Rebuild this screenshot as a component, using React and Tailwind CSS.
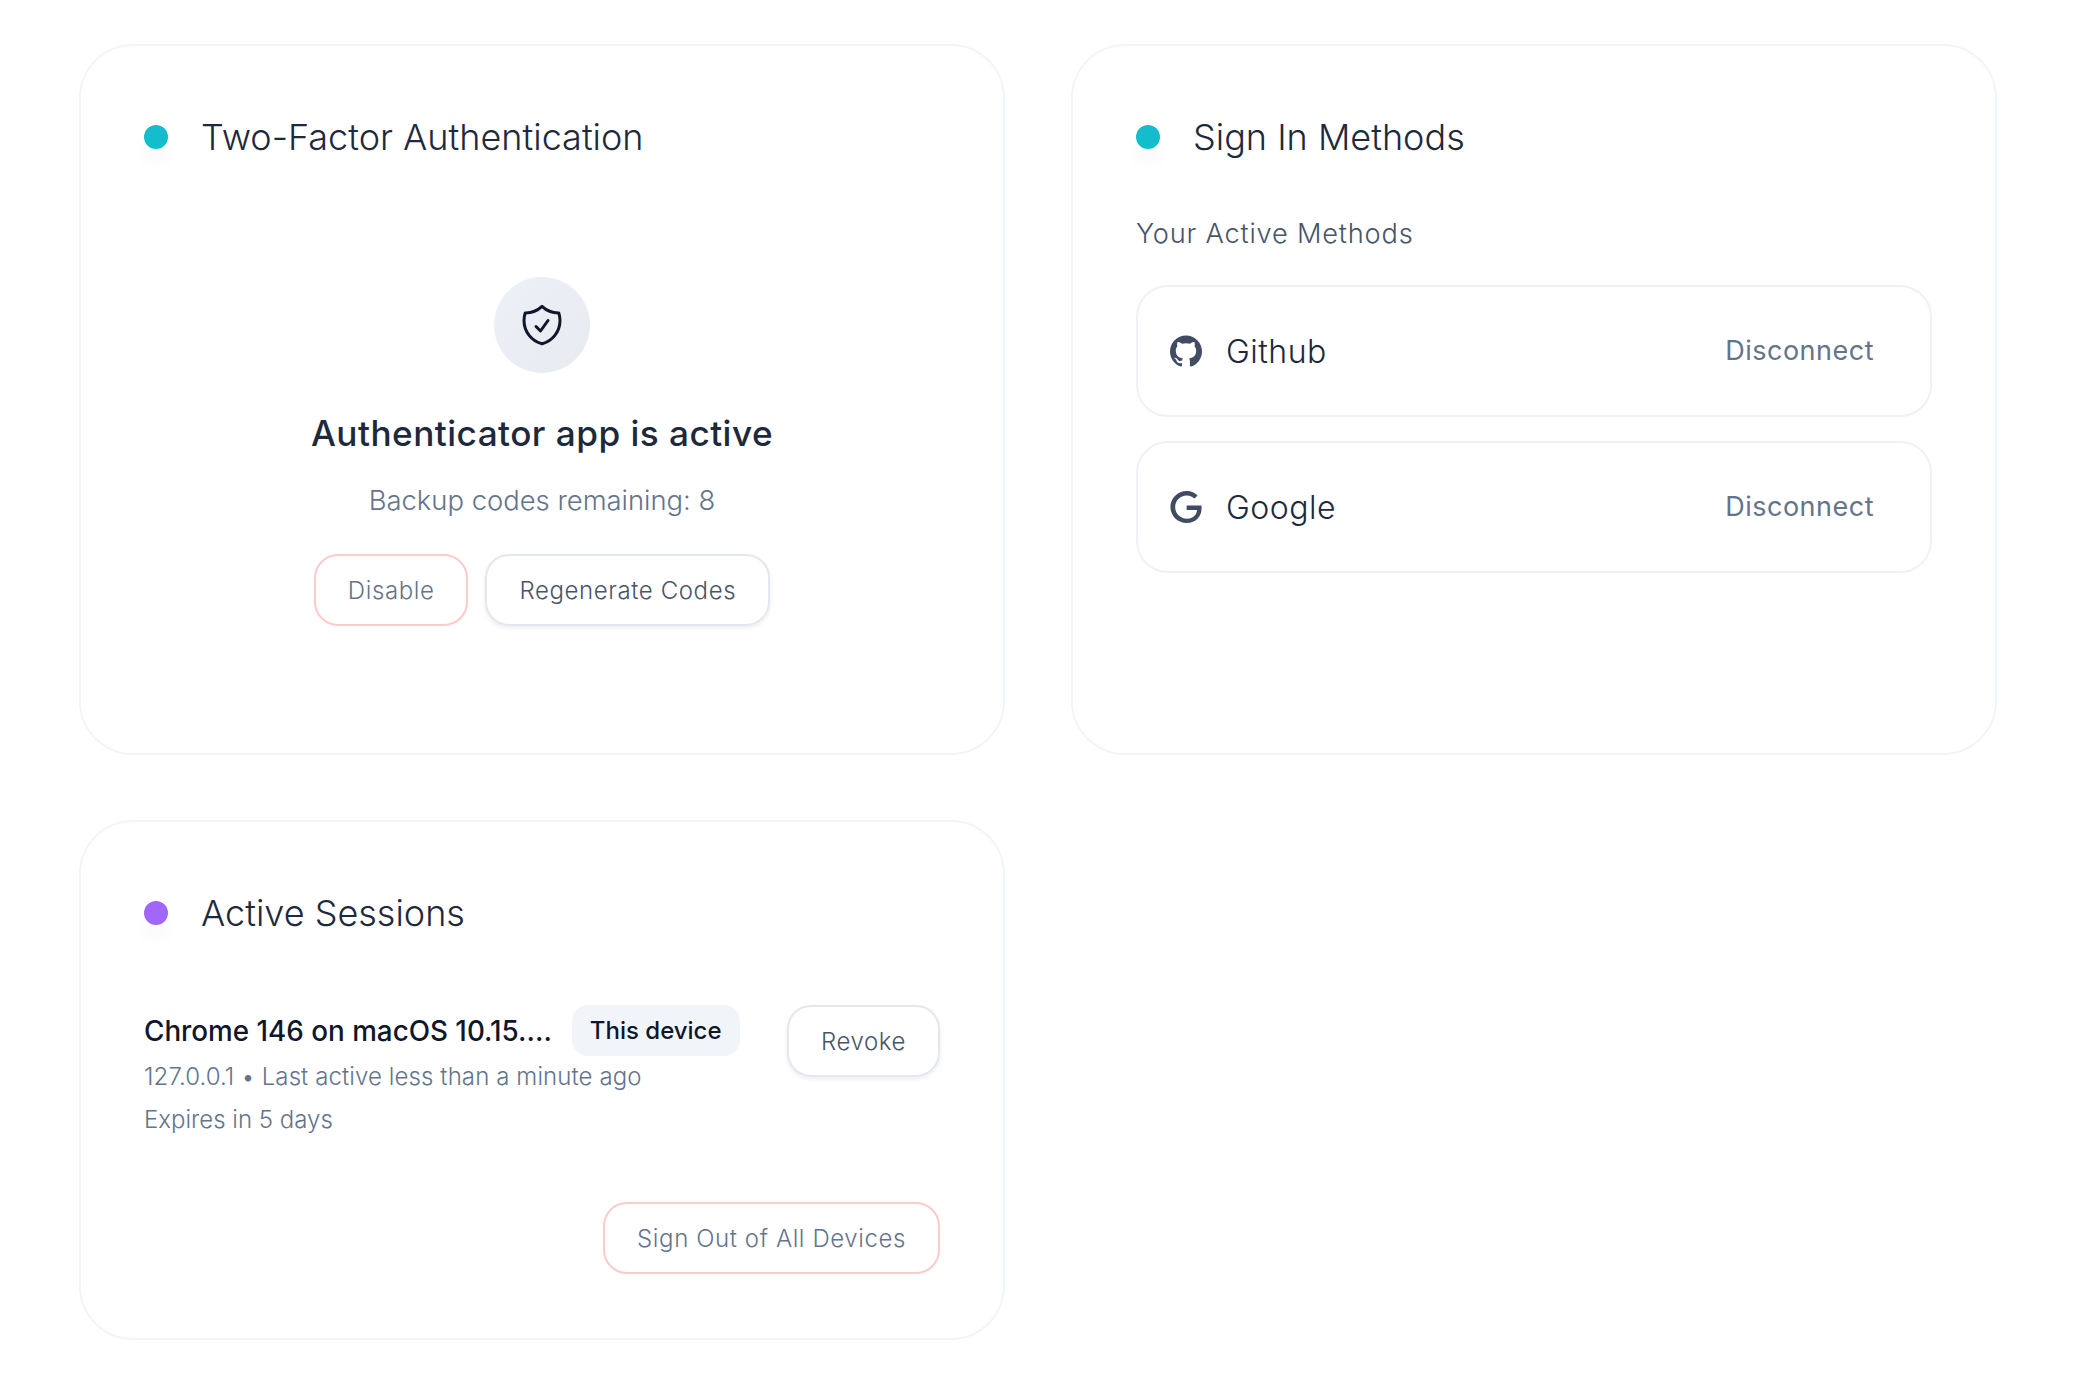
import { HiOutlineShieldCheck } from "react-icons/hi2";
import { SiGithub, SiGoogle } from "react-icons/si";

function CardTitle({ color, children }) {
  return (
    <div className="flex items-center gap-[33px]">
      <span className={`w-6 h-6 rounded-full shrink-0 shadow-[0_16px_20px_-2px_rgba(15,23,42,0.04)] ${color}`} />
      <h2 className="text-[36px] leading-[48px] font-[350] text-[#1e293b]">{children}</h2>
    </div>
  );
}

function Card({ className, children }) {
  return <div className={`rounded-[54px] border-2 border-[#f1f5f9] bg-white px-[63px] pt-[67px] ${className}`}>{children}</div>;
}

function MethodRow({ icon, name }) {
  return (
    <div className="h-[132px] rounded-[32px] border-2 border-[#eef1f7] flex items-center justify-between pl-[32px] pr-[56px]">
      <div className="flex items-center gap-[24px]">
        {icon}
        <span className="pt-[2px] text-[32px] font-[350] tracking-[0.5px] text-[#1e293b]">{name}</span>
      </div>
      <button className="pt-[1px] text-[27px] font-normal tracking-[0.5px] text-[#64748b]">Disconnect</button>
    </div>
  );
}

const dangerBtn = "h-[72px] px-[32px] pt-[1px] rounded-[24px] border-2 border-[#fecaca] text-[24px] font-[350] tracking-[0.6px] text-[#64748b]";
const plainBtn = "h-[72px] px-[32px] pt-[1px] rounded-[24px] border-2 border-[#e2e8f0] shadow-[0_2px_4px_rgba(15,23,42,0.08)] text-[24px] font-[350] tracking-[0.6px] text-[#475569]";

export default function App() {
  return (
    <div className="min-h-screen bg-white font-['Inter',sans-serif]">
      <div className="grid grid-cols-[926px_926px] gap-x-[66px] gap-y-[65px] pl-[79px] pt-[44px]">
        <Card className="h-[711px]">
          <CardTitle color="bg-[#14bdcb]">Two-Factor Authentication</CardTitle>
          <div className="flex flex-col items-center mt-[116px]">
            <div className="w-[96px] h-[96px] rounded-full bg-gradient-to-br from-[#edf1f8] to-[#e7eaef] flex items-center justify-center">
              <HiOutlineShieldCheck size={48} className="text-[#0f172a]" />
            </div>
            <div className="mt-[36px] text-[35.2px] leading-[48px] font-medium tracking-[0.45px] text-[#1e293b]">Authenticator app is active</div>
            <div className="mt-[23px] text-[27.4px] leading-[40px] font-[350] text-[#64748b]">Backup codes remaining: 8</div>
            <div className="mt-[34px] flex gap-[17px]">
              <button className={dangerBtn}>Disable</button>
              <button className={plainBtn}>Regenerate Codes</button>
            </div>
          </div>
        </Card>
        <Card className="h-[711px]">
          <CardTitle color="bg-[#14bdcb]">Sign In Methods</CardTitle>
          <div className="mt-[52px] text-[27.2px] leading-[41px] font-[350] tracking-[0.8px] text-[#475569]">Your Active Methods</div>
          <div className="mt-[31px] flex flex-col gap-[24px]">
            <MethodRow icon={<SiGithub size={32} className="text-[#414c62]" />} name="Github" />
            <MethodRow icon={<SiGoogle size={32} className="text-[#414c62]" />} name="Google" />
          </div>
        </Card>
        <Card className="h-[520px]">
          <CardTitle color="bg-[#a366fa]">Active Sessions</CardTitle>
          <div className="mt-[68px] flex items-start justify-between">
            <div>
              <div className="flex items-center gap-[20px]">
                <span className="pt-[2px] text-[27.8px] font-medium text-[#0f172a]">Chrome 146 on macOS 10.15....</span>
                <span className="h-[51px] px-[18px] rounded-[16px] bg-[#f1f5f9] flex items-center text-[24px] font-medium text-[#0f172a]">This device</span>
              </div>
              <div className="-mt-[1px] text-[24px] leading-[43px] font-[350] tracking-[0.1px] text-[#64748b]">127.0.0.1 • Last active less than a minute ago</div>
              <div className="text-[24px] leading-[43px] font-[350] text-[#64748b]">Expires in 5 days</div>
            </div>
            <button className={plainBtn}>Revoke</button>
          </div>
          <div className="mt-[61px] flex justify-end">
            <button className={dangerBtn}>Sign Out of All Devices</button>
          </div>
        </Card>
      </div>
    </div>
  );
}
